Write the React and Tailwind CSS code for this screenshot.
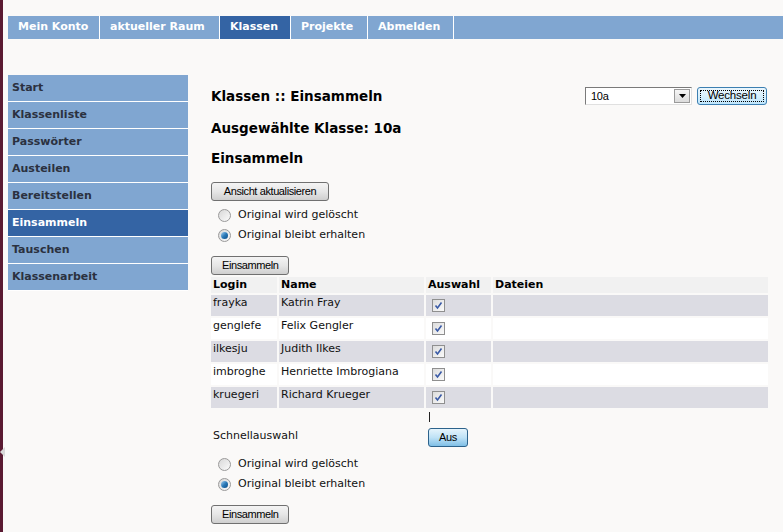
import React from 'react';

const navItems = [
  { label: 'Mein Konto', w: 'w-[92px]' },
  { label: 'aktueller Raum', w: 'w-[120px]' },
  { label: 'Klassen', w: 'w-[71px]', active: true },
  { label: 'Projekte', w: 'w-[77px]' },
  { label: 'Abmelden', w: 'w-[86px]' },
];

const sideItems = [
  'Start',
  'Klassenliste',
  'Passwörter',
  'Austeilen',
  'Bereitstellen',
  'Einsammeln',
  'Tauschen',
  'Klassenarbeit',
];

const students = [
  ['frayka', 'Katrin Fray'],
  ['genglefe', 'Felix Gengler'],
  ['ilkesju', 'Judith Ilkes'],
  ['imbroghe', 'Henriette Imbrogiana'],
  ['kruegeri', 'Richard Krueger'],
];

const verdana = "font-['DejaVu_Sans',Verdana,sans-serif]";
const tahoma = "font-['Liberation_Sans',Tahoma,sans-serif]";

function XpButton({ children, className = '' }) {
  return (
    <button
      className={`h-[19px] rounded-[3px] border border-[#707070] bg-gradient-to-b from-[#f4f4f4] via-[#e6e6e6] to-[#cfcfcf] px-[10px] text-[11px] leading-none tracking-[-0.4px] text-black ${tahoma} ${className}`}
    >
      {children}
    </button>
  );
}

function Radio({ checked, label }) {
  return (
    <label className={`flex h-[20px] items-center gap-[7px] pl-[7px] text-[11px] text-[#111] ${verdana}`}>
      <span className="flex h-[13px] w-[13px] items-center justify-center rounded-full border border-[#9a9a9a] bg-gradient-to-br from-[#d8d8d8] to-[#fbfbfb]">
        {checked && (
          <span className="h-[7px] w-[7px] rounded-full bg-gradient-to-br from-[#9fd0f0] via-[#2a7ab8] to-[#0c4b85]" />
        )}
      </span>
      {label}
    </label>
  );
}

function Check() {
  return (
    <span className="mt-[4px] ml-[6px] flex h-[13px] w-[13px] items-center justify-center border border-[#8f8f8f] bg-gradient-to-br from-[#dcdcdc] to-[#fafafa]">
      <svg width="9" height="9" viewBox="0 0 9 9">
        <path d="M1.5 4.5 L3.5 7 L7.5 1.5" fill="none" stroke="#3a5aa6" strokeWidth="1.6" />
      </svg>
    </span>
  );
}

export default function App() {
  return (
    <div className="relative flex h-[532px] w-[783px] overflow-hidden bg-[#faf9f8]">
      <div className="w-[3px] shrink-0 bg-[#5a1a32]" />
      <div className="absolute left-0 top-[447px] h-0 w-0 border-y-[5px] border-r-[5px] border-y-transparent border-r-[#d8d8d8]" />

      <div className="flex flex-1 flex-col pl-[5px] pt-[16px]">
        <nav className={`flex h-[23px] shrink-0 bg-[#80a6d1] ${verdana}`}>
          {navItems.map((n) => (
            <div
              key={n.label}
              className={`${n.w} flex items-center border-r border-white pl-[10px] text-[11px] font-bold text-white ${
                n.active ? 'bg-[#3464a4]' : ''
              }`}
            >
              {n.label}
            </div>
          ))}
          <div className="flex-1" />
        </nav>

        <div className="mt-[36px] flex shrink-0 gap-[23px]">
          <aside className={`w-[180px] shrink-0 self-start ${verdana}`}>
            {sideItems.map((s) => (
              <div
                key={s}
                className={`flex h-[27px] items-center border-b border-white pl-[4px] text-[11px] font-bold ${
                  s === 'Einsammeln' ? 'bg-[#3464a4] text-white' : 'bg-[#80a6d1] text-[#2b3140]'
                }`}
              >
                {s}
              </div>
            ))}
          </aside>

          <main className="flex w-[557px] flex-col pt-[12px]">
            <div className="flex h-[18px] items-center">
              <h1 className={`pt-[1px] text-[13.5px] font-bold text-black ${verdana}`}>Klassen :: Einsammeln</h1>
              <div className="ml-auto mr-[1px] flex items-center gap-[5px]">
                <div className={`flex h-[18px] w-[107px] items-center border border-t-[#7a7a7a] border-l-[#7a7a7a] border-b-[#e0e0e0] border-r-[#e0e0e0] bg-white pl-[5px] text-[11px] tracking-[-0.3px] ${tahoma}`}>
                  <span className="flex-1">10a</span>
                  <span className="mr-[1px] flex h-[14px] w-[16px] items-center justify-center border border-[#9a9a9a] bg-gradient-to-b from-[#f6f6f6] to-[#dcdcdc]">
                    <svg width="7" height="4" viewBox="0 0 7 4">
                      <path d="M0 0 H7 L3.5 4 Z" fill="#000" />
                    </svg>
                  </span>
                </div>
                <button
                  className={`flex h-[18px] w-[70px] items-center justify-center rounded-[3px] border border-[#3c7fb1] bg-gradient-to-b from-[#eaf6fd] via-[#d9f0fc] to-[#bee6fd] p-[2px] text-[11.5px] leading-none tracking-[-0.2px] text-black ${tahoma}`}
                >
                  <span className="flex h-full w-full items-center justify-center border border-dotted border-black">
                    Wechseln
                  </span>
                </button>
              </div>
            </div>

            <h2 className={`mt-[13px] flex h-[20px] items-center text-[13.5px] font-bold text-black ${verdana}`}>
              Ausgewählte Klasse: 10a
            </h2>
            <h3 className={`mt-[10px] flex h-[20px] items-center text-[13.5px] font-bold text-black ${verdana}`}>
              Einsammeln
            </h3>

            <div className="mt-[14px] flex">
              <XpButton className="w-[118px]">Ansicht aktualisieren</XpButton>
            </div>
            <div className="mt-[4px] flex flex-col">
              <Radio label="Original wird gelöscht" />
              <Radio checked label="Original bleibt erhalten" />
            </div>
            <div className="mt-[11px] flex">
              <XpButton className="w-[78px]">Einsammeln</XpButton>
            </div>

            <div className={`mt-[2px] grid grid-cols-[66px_145px_65px_1fr] gap-x-[2px] gap-y-[2px] text-[11px] text-[#111] ${verdana}`}>
              {['Login', 'Name', 'Auswahl', 'Dateien'].map((h) => (
                <div key={h} className="flex h-[16px] items-center bg-[#f1f1f1] pl-[2px] font-bold text-black">
                  {h}
                </div>
              ))}
              {students.map(([login, name], i) => {
                const bg = i % 2 === 0 ? 'bg-[#dcdce3]' : 'bg-white';
                return (
                  <React.Fragment key={login}>
                    <div className={`h-[21px] pl-[2px] leading-[16px] ${bg}`}>{login}</div>
                    <div className={`h-[21px] pl-[2px] leading-[16px] ${bg}`}>{name}</div>
                    <div className={`flex h-[21px] items-start ${bg}`}>
                      <Check />
                    </div>
                    <div className={`h-[21px] ${bg}`} />
                  </React.Fragment>
                );
              })}
            </div>

            <div className={`mt-[4px] grid grid-cols-[66px_145px_65px_1fr] gap-x-[2px] text-[11px] text-[#111] ${verdana}`}>
              <div className="col-span-2 flex items-end pb-[3px] pl-[2px]">Schnellauswahl</div>
              <div className="flex flex-col items-start pl-[2px]">
                <span className="ml-[1px] h-[10px] w-[1px] bg-[#222]" />
                <button
                  className={`mt-[6px] h-[19px] w-[40px] rounded-[3px] border border-[#2c628b] bg-gradient-to-b from-[#e5f4fc] via-[#bfe2f6] to-[#7fbfe6] text-[11px] leading-none tracking-[-0.3px] text-black ${tahoma}`}
                >
                  Aus
                </button>
              </div>
              <div />
            </div>

            <div className="mt-[7px] flex flex-col">
              <Radio label="Original wird gelöscht" />
              <Radio checked label="Original bleibt erhalten" />
            </div>
            <div className="mt-[11px] flex">
              <XpButton className="w-[78px]">Einsammeln</XpButton>
            </div>
          </main>
        </div>
      </div>
    </div>
  );
}
